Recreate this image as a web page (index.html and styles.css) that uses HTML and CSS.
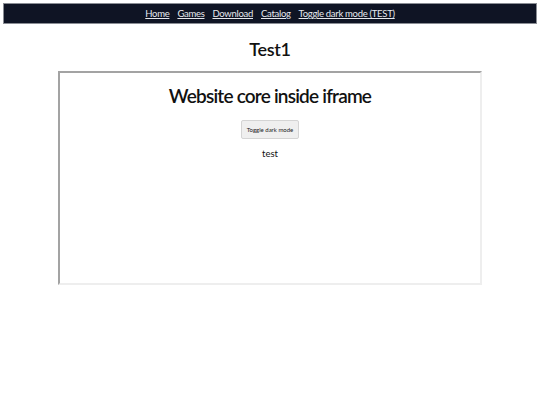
FILE: index.html
```html
<!DOCTYPE html>
<html>
<head>
<meta charset="utf-8">
<link rel="stylesheet" href="styles.css">
</head>
<body>
<nav class="topbar">
  <a href="#">Home</a>
  <a href="#">Games</a>
  <a href="#">Download</a>
  <a href="#">Catalog</a>
  <a href="#">Toggle dark mode (TEST)</a>
</nav>
<h1 class="title">Test1</h1>
<div class="frame">
  <h2 class="frame-title">Website core inside iframe</h2>
  <button class="toggle">Toggle dark mode</button>
  <p class="frame-text">test</p>
</div>
</body>
</html>
```
FILE: styles.css
```css
html, body {
  margin: 0;
  padding: 0;
  background: #ffffff;
}
body {
  padding: 3px;
  font-family: "Lato", "Noto Sans", sans-serif;
  color: #111;
}
.topbar {
  display: flex;
  justify-content: center;
  gap: 8px;
  height: 19px;
  align-items: center;
  background: #0f1424;
  border: 1px solid #8a8d94;
  font-size: 9.5px;
  letter-spacing: -0.3px;
}
.topbar a {
  color: #e6e8ee;
  text-decoration: underline;
}
.title {
  margin: 14px 0 0;
  text-align: center;
  font-size: 18px;
  font-weight: 600;
  line-height: 22px;
  letter-spacing: -0.3px;
}
.frame {
  margin: 11px auto 0;
  width: 420px;
  height: 210px;
  border-style: solid;
  border-width: 2px;
  border-color: #a3a3a3 #eeeeee #eeeeee #a3a3a3;
  display: flex;
  flex-direction: column;
  align-items: center;
}
.frame-title {
  margin: 11px 0 0;
  font-size: 19px;
  font-weight: 600;
  line-height: 24px;
  letter-spacing: -0.8px;
}
.toggle {
  margin-top: 12px;
  font-family: inherit;
  font-size: 6px;
  padding: 5px 5px;
  background: #efefef;
  border: 1px solid #d4d4d4;
  border-radius: 2px;
  color: #222;
}
.frame-text {
  margin: 9px 0 0;
  font-size: 9.5px;
}
```
